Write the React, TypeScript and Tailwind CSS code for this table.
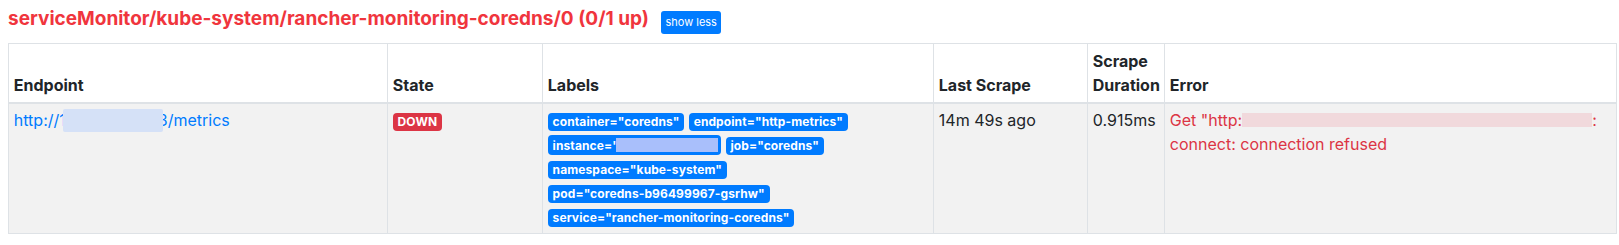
import React from 'react';

const labels = [
  'container="coredns"',
  'endpoint="http-metrics"',
  'instance',
  'job="coredns"',
  'namespace="kube-system"',
  'pod="coredns-b96499967-gsrhw"',
  'service="rancher-monitoring-coredns"',
];

function Badge({ children, color = 'bg-[#007bff]' }: { children: React.ReactNode; color?: string }) {
  return (
    <span
      className={`inline-block ${color} text-white text-[12px] font-bold leading-none tracking-[0.1px] px-[4.8px] py-[3px] rounded-[4px] align-baseline whitespace-nowrap`}
    >
      {children}
    </span>
  );
}

export default function App() {
  const th =
    'border border-[#dee2e6] border-b-2 px-[4.8px] py-[4.8px] text-left align-bottom font-bold';
  const td = 'border border-[#dee2e6] px-[4.8px] py-[4.8px] align-top';

  return (
    <div className="font-['Inter',sans-serif] text-[16px] leading-[24px] text-[#212529] bg-white pt-[7px] pl-[8px] h-[245px]">
      <div className="flex items-start gap-[12px]">
        <h2 className="text-[19px] leading-[24px] font-bold text-[#f0353d]">
          serviceMonitor/kube-system/rancher-monitoring-coredns/0 (0/1 up)
        </h2>
        <button className="mt-[4px] h-[23px] px-[4.5px] rounded-[3px] bg-[#007bff] text-white text-[11px] leading-[23px]">
          show less
        </button>
      </div>

      <table className="mt-[9px] w-[1608px] table-fixed border-collapse">
        <colgroup>
          <col className="w-[379px]" />
          <col className="w-[155px]" />
          <col className="w-[391px]" />
          <col className="w-[154px]" />
          <col className="w-[77px]" />
          <col className="w-[452px]" />
        </colgroup>
        <thead>
          <tr>
            <th className={th}>Endpoint</th>
            <th className={th}>State</th>
            <th className={th}>Labels</th>
            <th className={th}>Last Scrape</th>
            <th className={th}>Scrape Duration</th>
            <th className={th}>Error</th>
          </tr>
        </thead>
        <tbody>
          <tr className="bg-[#f2f2f2]">
            <td className={td}>
              <a className="text-[#007bff] whitespace-nowrap">
                http://1
                <span className="relative inline-block w-[100px] h-[23px] -ml-[3px] -mr-[5px] align-[-6px] bg-[#d5e1f7] rounded-[2px]" />
                3/metrics
              </a>
            </td>
            <td className={td}>
              <Badge color="bg-[#dc3545]">DOWN</Badge>
            </td>
            <td className={td}>
              {labels.map((l) => (
                <React.Fragment key={l}>
                  {l === 'instance' ? (
                    <Badge>
                      instance='
                      <span className="inline-block w-[102px] h-[14px] -mr-[2px] align-[-2px] bg-[#a9bffb]" />
                    </Badge>
                  ) : (
                    <Badge>{l}</Badge>
                  )}{' '}
                </React.Fragment>
              ))}
            </td>
            <td className={td}>14m 49s ago</td>
            <td className={td}>0.915ms</td>
            <td className={`${td} text-[#dc3545]`}>
              Get "http:
              <span className="inline-block w-[350px] h-[14px] align-[-1px] bg-[#f1d9dc]" />: connect: connection refused
            </td>
          </tr>
        </tbody>
      </table>
    </div>
  );
}
